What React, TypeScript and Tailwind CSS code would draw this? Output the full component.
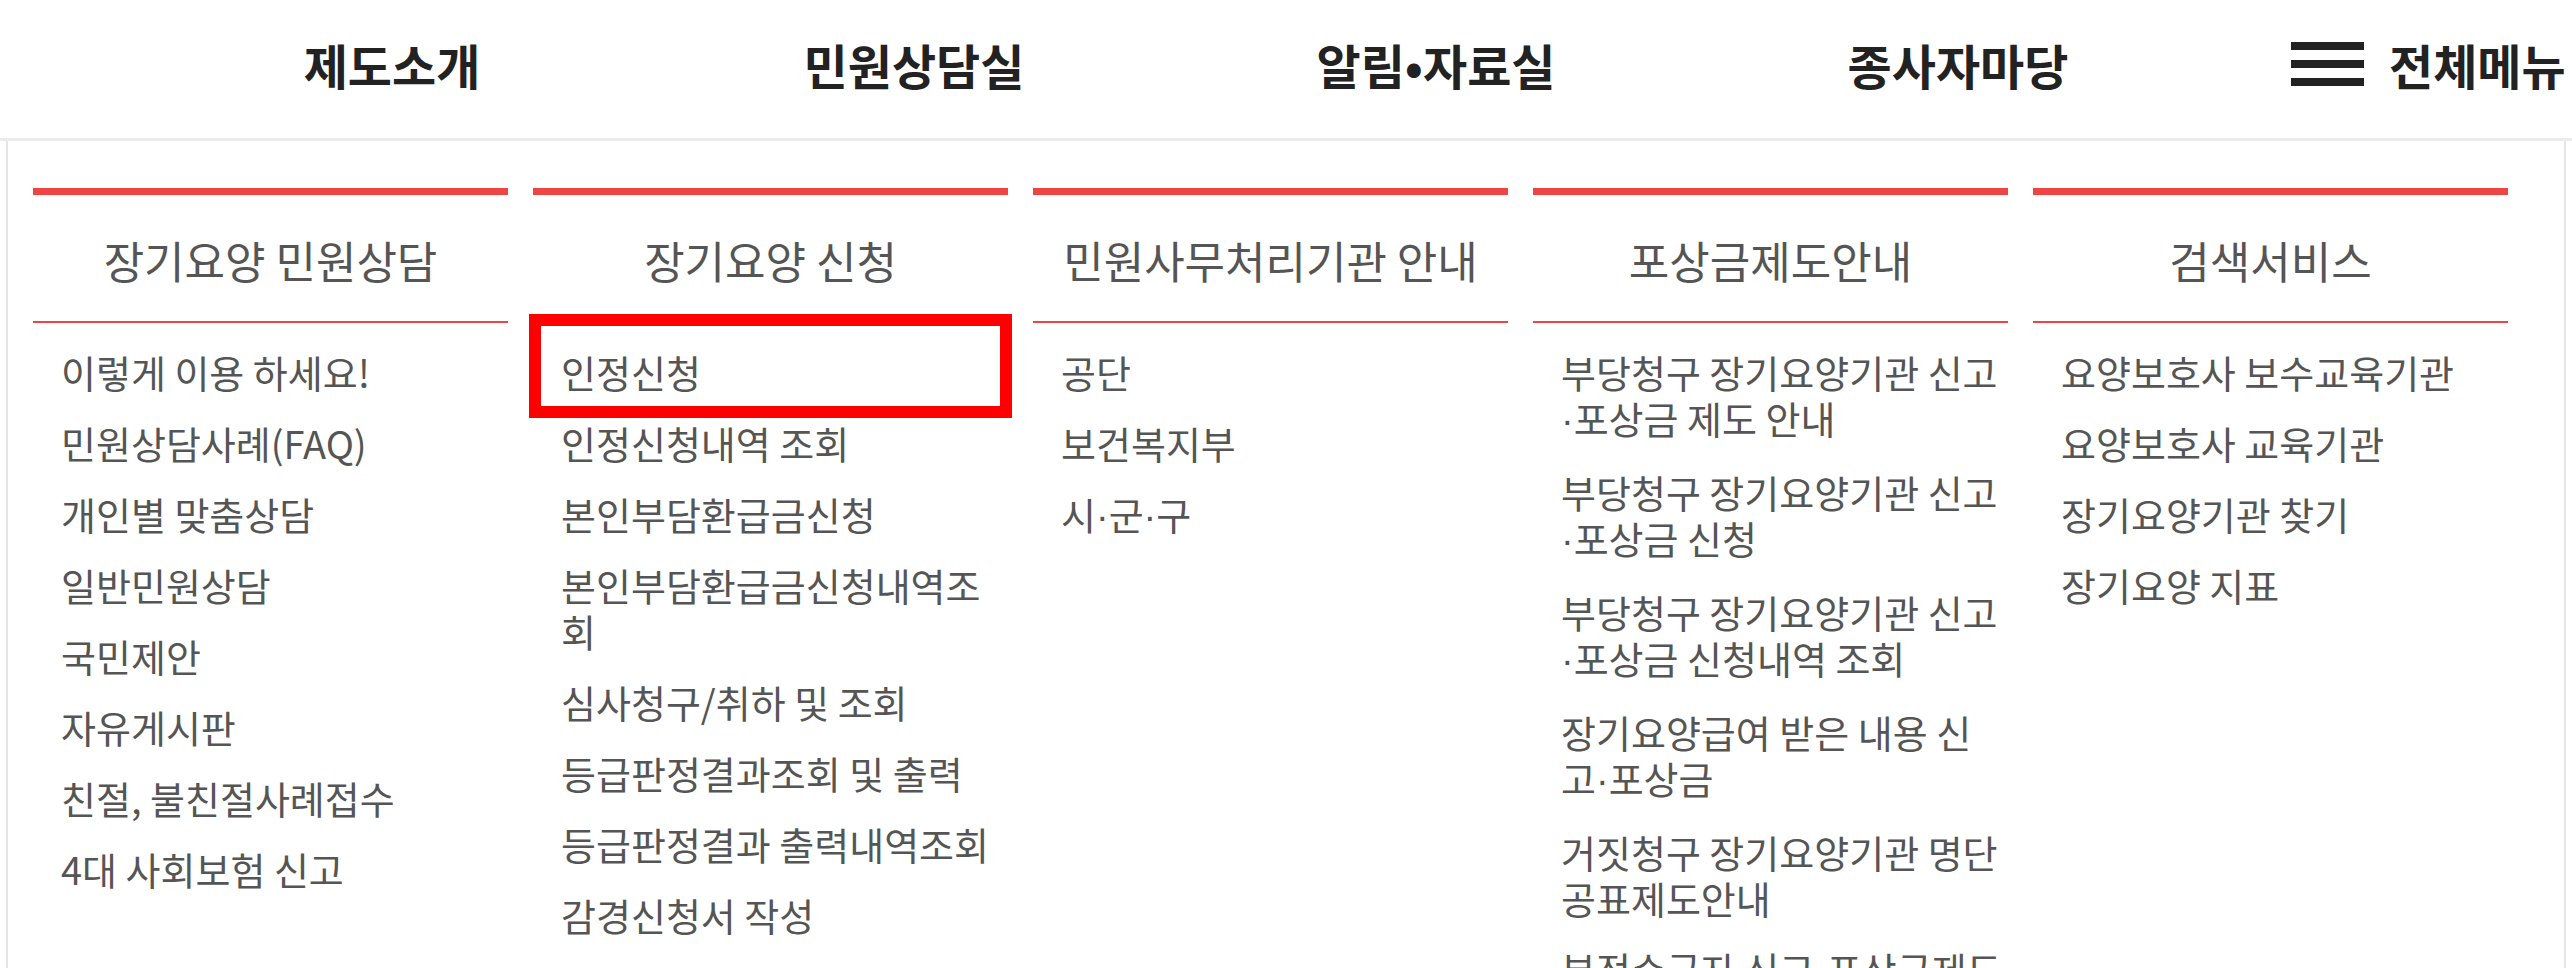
const navItems = ['제도소개', '민원상담실', '알림•자료실', '종사자마당'];

const columns = [
  {
    title: '장기요양 민원상담',
    items: [
      '이렇게 이용 하세요!',
      '민원상담사례(FAQ)',
      '개인별 맞춤상담',
      '일반민원상담',
      '국민제안',
      '자유게시판',
      '친절, 불친절사례접수',
      '4대 사회보험 신고',
    ],
  },
  {
    title: '장기요양 신청',
    items: [
      '인정신청',
      '인정신청내역 조회',
      '본인부담환급금신청',
      '본인부담환급금신청내역조회',
      '심사청구/취하 및 조회',
      '등급판정결과조회 및 출력',
      '등급판정결과 출력내역조회',
      '감경신청서 작성',
    ],
    highlight: true,
  },
  {
    title: '민원사무처리기관 안내',
    items: ['공단', '보건복지부', '시·군·구'],
  },
  {
    title: '포상금제도안내',
    items: [
      '부당청구 장기요양기관 신고·포상금 제도 안내',
      '부당청구 장기요양기관 신고·포상금 신청',
      '부당청구 장기요양기관 신고·포상금 신청내역 조회',
      '장기요양급여 받은 내용 신고·포상금',
      '거짓청구 장기요양기관 명단 공표제도안내',
      '부정수급자 신고·포상금제도 안내',
    ],
  },
  {
    title: '검색서비스',
    items: ['요양보호사 보수교육기관', '요양보호사 교육기관', '장기요양기관 찾기', '장기요양 지표'],
  },
];

// narrow middle dot, the CJK font draws it full width
function withDots(text: string) {
  const parts = text.split('·');
  return parts.map((part, i) => (
    <span key={i}>
      {i > 0 && <span className="font-['Liberation_Sans',sans-serif]">·</span>}
      {part}
    </span>
  ));
}

export default function App() {
  return (
    <div className="w-full h-[968px] overflow-hidden bg-white font-['Noto_Sans_CJK_KR','Noto_Sans',sans-serif]">
      {/* Top navigation */}
      <header className="h-[141px] border-b-[3px] border-[#ebebeb] flex items-center pl-[131px] pb-[10px]">
        {navItems.map((label) => (
          <a key={label} href="#" className="w-[522px] shrink-0 text-center text-[48px] font-bold text-[#222] whitespace-nowrap">
            {label}
          </a>
        ))}
        <button className="ml-[72px] flex items-center gap-[25px] shrink-0" aria-label="전체메뉴">
          <span className="flex flex-col gap-[10px]">
            <span className="block h-[8px] w-[73px] bg-[#222]" />
            <span className="block h-[8px] w-[73px] bg-[#222]" />
            <span className="block h-[8px] w-[73px] bg-[#222]" />
          </span>
          <span className="text-[48px] font-bold text-[#222] whitespace-nowrap">전체메뉴</span>
        </button>
      </header>

      {/* Dropdown panel */}
      <div className="mx-[6px] h-[827px] border-x-2 border-[#e5e5e5] flex gap-[25px] pl-[25px] pt-[47px]">
        {columns.map((col) => (
          <div key={col.title} className="relative w-[475px] shrink-0">
            <div className="border-t-[7px] border-[#ef4444]">
              <div className="h-[128px] border-b-2 border-[#ef4444] flex items-center justify-center pt-[4px] text-[44px] text-[#555] whitespace-nowrap">
                {col.title}
              </div>
            </div>
            <ul className="pt-[13px]">
              {col.items.map((item) => (
                <li key={item} className="py-[12.5px] pl-[28px] pr-[4px] text-[38px] leading-[46px] text-[#555]">
                  <a href="#">{withDots(item)}</a>
                </li>
              ))}
            </ul>
            {col.highlight && (
              <div className="absolute left-[-4px] top-[126px] w-[483px] h-[104px] border-[12px] border-[#ff0000]" />
            )}
          </div>
        ))}
      </div>
    </div>
  );
}
